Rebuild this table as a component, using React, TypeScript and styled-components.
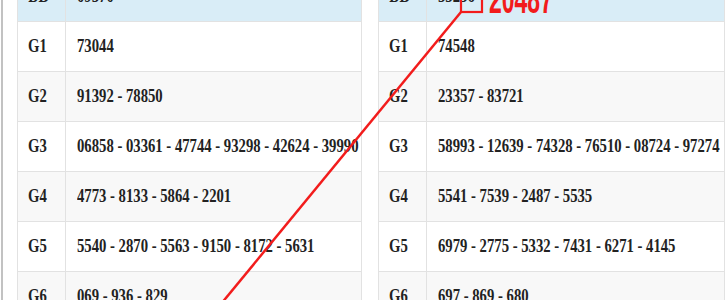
import React from "react"
import styled, { createGlobalStyle } from "styled-components"

const GlobalStyle = createGlobalStyle`
	html, body {
		margin: 0;
		padding: 0;
		background: #fff;
	}
	body {
		font-family: "Liberation Serif", "Times New Roman", serif;
	}
`

const Page = styled.div`
	position: relative;
	width: 725px;
	height: 300px;
	overflow: hidden;
	background: #fff;
`

const Frame = styled.div`
	display: flex;
	gap: 16px;
	height: 100%;
	margin-left: 1px;
	padding-left: 14px;
	border-left: 2px solid #c2c2c2;
`

const Table = styled.table<{ $width: number }>`
	width: ${(p) => p.$width}px;
	flex: none;
	margin-top: -29px;
	border-collapse: collapse;
	table-layout: fixed;
	border: 1px solid #dedede;
	align-self: flex-start;
`

const LabelCol = styled.col`
	width: 48px;
`

const Row = styled.tr<{ $head?: boolean; $striped?: boolean }>`
	background: ${(p) => (p.$head ? "#d9edf7" : p.$striped ? "#f8f8f8" : "#fff")};
`

const Cell = styled.td`
	height: 49px;
	padding: 0 10px;
	border: 1px solid #e2e2e2;
	white-space: nowrap;
	overflow: hidden;
	vertical-align: middle;
	color: #222;
	font-size: 14.7px;
	font-weight: 700;
`

const ValueCell = styled(Cell)`
	padding-left: 11px;
	overflow: visible;
`

const Text = styled.span`
	display: inline-block;
	transform: scaleY(1.33);
`

const Overlay = styled.svg`
	position: absolute;
	left: 0;
	top: 0;
	pointer-events: none;
`

interface Prize {
	label: string
	value: string
}

const left: Prize[] = [
	{ label: "ĐB", value: "09570" },
	{ label: "G1", value: "73044" },
	{ label: "G2", value: "91392 - 78850" },
	{ label: "G3", value: "06858 - 03361 - 47744 - 93298 - 42624 - 39990" },
	{ label: "G4", value: "4773 - 8133 - 5864 - 2201" },
	{ label: "G5", value: "5540 - 2870 - 5563 - 9150 - 8172 - 5631" },
	{ label: "G6", value: "069 - 936 - 829" },
]

const right: Prize[] = [
	{ label: "ĐB", value: "55236" },
	{ label: "G1", value: "74548" },
	{ label: "G2", value: "23357 - 83721" },
	{ label: "G3", value: "58993 - 12639 - 74328 - 76510 - 08724 - 97274" },
	{ label: "G4", value: "5541 - 7539 - 2487 - 5535" },
	{ label: "G5", value: "6979 - 2775 - 5332 - 7431 - 6271 - 4145" },
	{ label: "G6", value: "697 - 869 - 680" },
]

const Results = ({ rows, width }: { rows: Prize[]; width: number }) => (
	<Table $width={width}>
		<colgroup>
			<LabelCol />
			<col />
		</colgroup>
		<tbody>
			{rows.map((r, i) => (
				<Row key={r.label} $head={i === 0} $striped={i > 0 && i % 2 === 0}>
					<Cell>
						<Text>{r.label}</Text>
					</Cell>
					<ValueCell>
						<Text>{r.value}</Text>
					</ValueCell>
				</Row>
			))}
		</tbody>
	</Table>
)

const App = () => {
	return (
		<Page>
			<GlobalStyle />
			<Frame>
				<Results rows={left} width={345} />
				<Results rows={right} width={347} />
			</Frame>
			<Overlay width="725" height="300" viewBox="0 0 725 300">
				<rect x="461" y="-20" width="21" height="32" fill="none" stroke="#f21c1c" strokeWidth="2.2" />
				<line x1="461" y1="12" x2="221" y2="304" stroke="#f21c1c" strokeWidth="2.5" />
				<text
					transform="translate(489 13) scale(1 1.75)"
					fill="#f21c1c"
					fontFamily="'Liberation Sans', Arial, sans-serif"
					fontWeight="700"
					fontSize="23"
				>
					20487
				</text>
			</Overlay>
		</Page>
	)
}

export default App
